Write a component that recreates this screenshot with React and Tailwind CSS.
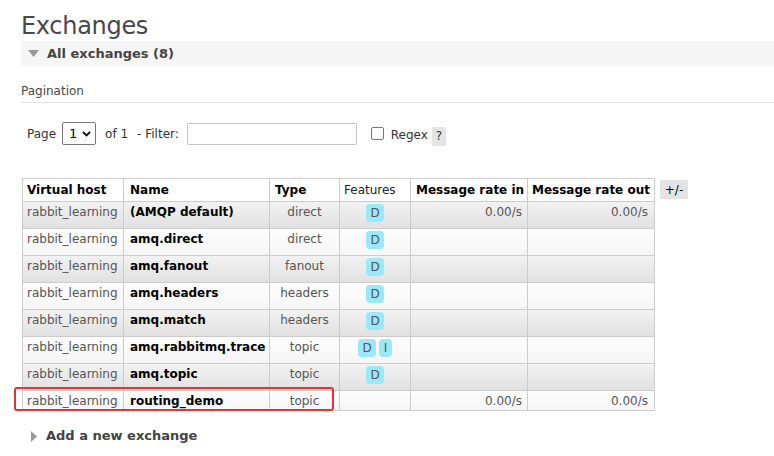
import React from "react";

const rows = [
  { name: "(AMQP default)", type: "direct", f: ["D"], rin: "0.00/s", rout: "0.00/s" },
  { name: "amq.direct", type: "direct", f: ["D"] },
  { name: "amq.fanout", type: "fanout", f: ["D"] },
  { name: "amq.headers", type: "headers", f: ["D"] },
  { name: "amq.match", type: "headers", f: ["D"] },
  { name: "amq.rabbitmq.trace", type: "topic", f: ["D", "I"] },
  { name: "amq.topic", type: "topic", f: ["D"] },
  { name: "routing_demo", type: "topic", f: [], rin: "0.00/s", rout: "0.00/s" },
];

function Badge({ l }) {
  return (
    <span
      className={`inline-block h-[18px] rounded-[4px] bg-[#99e8fc] text-[#555] leading-[18px] text-center ${
        l === "I" ? "w-[13px]" : "w-[18px]"
      }`}
    >
      {l}
    </span>
  );
}

export default function App() {
  return (
    <div
      className="relative w-[774px] h-[456px] bg-white text-[12px] text-[#484848] overflow-hidden"
      style={{ fontFamily: '"DejaVu Sans", Verdana, sans-serif' }}
    >
      <div className="pl-[21px]">
        <h1 className="pt-[11px] text-[24px] leading-[30px] text-[#484848] font-normal tracking-[-0.3px]">
          Exchanges
        </h1>
        <div className="h-[25px] bg-[#f5f5f5] flex items-center pl-[7px]">
          <svg width="11" height="7" viewBox="0 0 11 7" className="mr-[8px]">
            <path d="M0 0 H11 L5.5 7 Z" fill="#999" />
          </svg>
          <span className="font-bold text-[13px] text-[#444]">All exchanges (8)</span>
        </div>
        <div className="mt-[18px] pb-[3px] border-b border-[#e2e2e2] text-[12px] text-[#484848] leading-[15px]">
          Pagination
        </div>
        <div className="mt-[19px] pl-[6px] flex items-center h-[23px] text-[12px] text-[#333]">
          <span>Page</span>
          <div className="ml-[6px] w-[34px] h-[23px] border border-[#767676] rounded-[2px] flex items-center pl-[6px] gap-[5px]">
            <span className="text-[13px] text-black">1</span>
            <svg width="9" height="6" viewBox="0 0 9 6">
              <path d="M1 1 L4.5 4.5 L8 1" stroke="#111" strokeWidth="1.8" fill="none" />
            </svg>
          </div>
          <span className="ml-[9px]">of 1</span>
          <span className="ml-[9px]">- Filter:</span>
          <div className="ml-[8px] w-[170px] h-[22px] border border-[#c6c6c6] rounded-[1px] bg-white" />
          <div className="ml-[14px] w-[13px] h-[13px] border border-[#767676] rounded-[2px] bg-white" />
          <span className="ml-[7px] mt-[3px]">Regex</span>
          <span className="ml-[4px] mt-[5px] w-[14px] h-[19px] bg-[#e4e4e4] flex items-center justify-center">?</span>
        </div>

        <div className="mt-[33px] ml-[1px] flex items-start">
          <table className="border-collapse table-fixed w-[632px] text-[12px]">
            <colgroup>
              <col className="w-[101px]" />
              <col className="w-[146px]" />
              <col className="w-[70px]" />
              <col className="w-[71px]" />
              <col className="w-[117px]" />
              <col className="w-[127px]" />
            </colgroup>
            <thead>
              <tr className="h-[23px] bg-white">
                <th className="border border-[#ccc] text-left font-bold text-black pl-[4px] whitespace-nowrap overflow-hidden align-middle">Virtual host</th>
                <th className="border border-[#ccc] text-left font-bold text-black pl-[6px] whitespace-nowrap overflow-hidden align-middle">Name</th>
                <th className="border border-[#ccc] text-left font-bold text-black pl-[5px] whitespace-nowrap overflow-hidden align-middle">Type</th>
                <th className="border border-[#ccc] text-left font-normal text-[#222] pl-[4px] whitespace-nowrap overflow-hidden align-middle">Features</th>
                <th className="border border-[#ccc] text-left font-bold text-black pl-[5px] whitespace-nowrap overflow-hidden align-middle">Message rate in</th>
                <th className="border border-[#ccc] text-left font-bold text-black pl-[4px] whitespace-nowrap overflow-hidden align-middle">Message rate out</th>
              </tr>
            </thead>
            <tbody>
              {rows.map((r, i) => {
                const odd = i % 2 === 0;
                const bg = odd
                  ? "bg-gradient-to-b from-[#f2f2f2] to-[#e0e0e0]"
                  : "bg-gradient-to-b from-[#fdfdfd] to-[#f5f5f5]";
                const h = r.f.length ? "h-[27px]" : "h-[20px]";
                return (
                  <tr key={i} className={`${bg} ${h}`}>
                    <td className="border border-[#ccc] pl-[4px] pt-[1px] align-top text-[#555] whitespace-nowrap">rabbit_learning</td>
                    <td className="border border-[#ccc] pl-[6px] pt-[1px] align-top font-bold text-black whitespace-nowrap overflow-hidden">{r.name}</td>
                    <td className="border border-[#ccc] px-[2px] pt-[1px] align-top text-center text-[#555]">{r.type}</td>
                    <td className="border border-[#ccc] px-[2px] pt-[2px] pb-[3px] align-top text-center">
                      <div className="flex justify-center gap-[3px]">
                        {r.f.map((l) => (
                          <Badge key={l} l={l} />
                        ))}
                      </div>
                    </td>
                    <td className="border border-[#ccc] pr-[5px] pt-[1px] align-top text-right text-[#555]">{r.rin || ""}</td>
                    <td className="border border-[#ccc] pr-[6px] pt-[1px] align-top text-right text-[#555]">{r.rout || ""}</td>
                  </tr>
                );
              })}
            </tbody>
          </table>
          <span className="ml-[5px] mt-[2px] w-[28px] h-[19px] bg-[#e4e4e4] text-black flex items-center justify-center">+/-</span>
        </div>

        <div className="mt-[17px] pl-[10px] flex items-center h-[16px]">
          <svg width="6" height="11" viewBox="0 0 6 11" className="mr-[9px]">
            <path d="M0 0 L6 5.5 L0 11 Z" fill="#999" />
          </svg>
          <span className="font-bold text-[13px] text-[#444]">Add a new exchange</span>
        </div>
      </div>

      <div className="absolute left-[14px] top-[387px] w-[320px] h-[24px] border-2 border-[#e53333] rounded-[3px]" />
    </div>
  );
}
